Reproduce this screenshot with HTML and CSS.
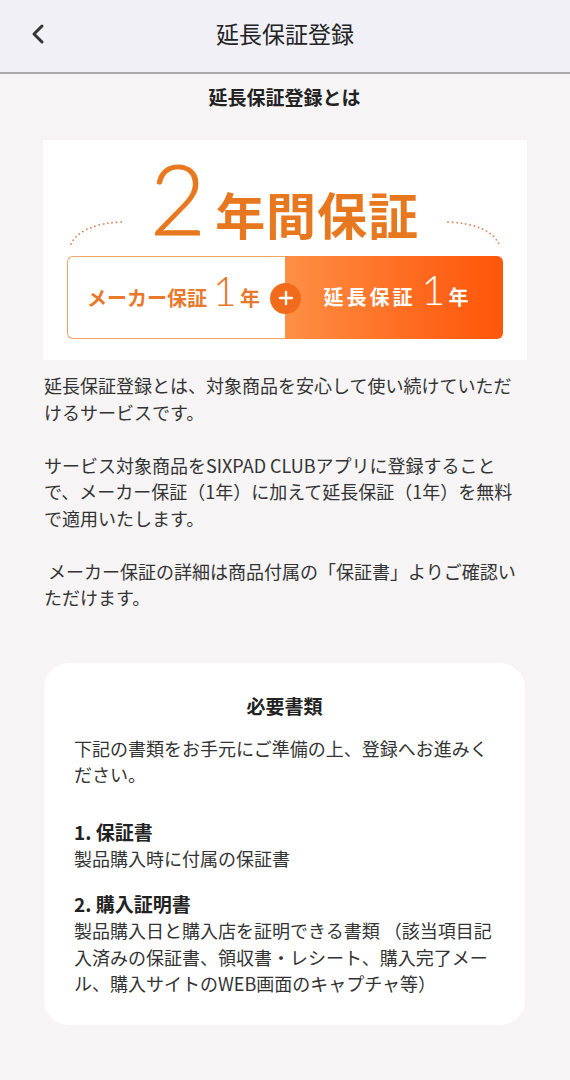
FILE: index.html
```html
<!DOCTYPE html>
<html lang="ja">
<head>
<meta charset="utf-8">
<title>延長保証登録</title>
<link rel="stylesheet" href="styles.css">
</head>
<body>
<header class="header">
  <div class="back">
    <svg width="16" height="22" viewBox="0 0 16 22"><polyline points="12,3 4,11 12,19" fill="none" stroke="#333" stroke-width="3" stroke-linecap="round" stroke-linejoin="round"/></svg>
  </div>
  <h1 class="header-title">延長保証登録</h1>
  <div></div>
</header>

<main class="page">
  <h2 class="subtitle">延長保証登録とは</h2>

  <section class="banner">
    <div class="headline">
      <svg class="arc" width="54" height="26" viewBox="0 0 54 26"><path d="M2 24 Q 12 4 53 2" fill="none" stroke="#d8926a" stroke-width="2" stroke-linecap="round" stroke-dasharray="0 4.4"/></svg>
      <span class="big-num">2</span>
      <span class="headline-text">年間保証</span>
      <svg class="arc" width="54" height="26" viewBox="0 0 54 26"><path d="M1 2 Q 42 4 52 24" fill="none" stroke="#d8926a" stroke-width="2" stroke-linecap="round" stroke-dasharray="0 4.4"/></svg>
    </div>
    <div class="box">
      <div class="box-left">
        <span class="box-label">メーカー保証</span><span class="box-num">1</span><span class="box-year">年</span>
      </div>
      <div class="box-right">
        <span class="box-label wide">延長保証</span><span class="box-num">1</span><span class="box-year">年</span>
      </div>
      <div class="plus">
        <svg width="16" height="16" viewBox="0 0 16 16"><path d="M8 2 V14 M2 8 H14" stroke="#fff" stroke-width="2.4" stroke-linecap="round"/></svg>
      </div>
    </div>
  </section>

  <p class="intro">延長保証登録とは、対象商品を安心して使い続けていただけるサービスです。<br><br>サービス対象商品をSIXPAD CLUBアプリに登録することで、メーカー保証（1年）に加えて延長保証（1年）を無料で適用いたします。<br><br>&nbsp;メーカー保証の詳細は商品付属の「保証書」よりご確認いただけます。</p>

  <section class="card">
    <h3 class="card-title">必要書類</h3>
    <p class="card-desc">下記の書類をお手元にご準備の上、登録へお進みください。</p>
    <div class="doc first">
      <h4 class="doc-title">1. 保証書</h4>
      <p class="doc-text">製品購入時に付属の保証書</p>
    </div>
    <div class="doc">
      <h4 class="doc-title">2. 購入証明書</h4>
      <p class="doc-text">製品購入日と購入店を証明できる書類 （該当項目記入済みの保証書、領収書・レシート、購入完了メール、購入サイトのWEB画面のキャプチャ等）</p>
    </div>
  </section>
</main>
</body>
</html>
```
FILE: styles.css
```css
* { box-sizing: border-box; }
html, body { margin: 0; padding: 0; }
body {
  background: #f6f4f5;
  font-family: "Noto Sans CJK JP", "Noto Sans", sans-serif;
  color: #333;
  width: 570px;
}
h1, h2, h3, h4, p { margin: 0; }

.header {
  height: 74px;
  background: #f1f0f7;
  border-bottom: 2px solid #aaaaad;
  display: grid;
  grid-template-columns: 70px 1fr 70px;
  align-items: center;
  padding-bottom: 6px;
}
.back {
  padding-left: 30px;
  display: flex;
  align-items: center;
  padding-top: 2px;
}
.header-title {
  text-align: center;
  font-size: 23px;
  font-weight: 400;
  color: #222;
  line-height: 30px;
}

.page {
  padding: 0 45px 0 44px;
}
.subtitle {
  margin-top: 10px;
  text-align: center;
  font-size: 19px;
  font-weight: 700;
  line-height: 26px;
  color: #222;
}

.banner {
  margin: 30px -2px 0 -1px;
  background: #fff;
  padding: 2px 24px 21px;
}
.headline {
  display: flex;
  justify-content: center;
  align-items: baseline;
  height: 114px;
  margin: 0 -24px;
  white-space: nowrap;
}
.arc {
  flex: none;
  align-self: flex-end;
  margin-bottom: 10px;
}
.big-num {
  flex: none;
  font-family: "Lato", "Noto Sans", sans-serif;
  font-weight: 300;
  font-size: 97px;
  line-height: 112px;
  color: #e8781f;
  margin-left: 27px;
  margin-right: 9px;
  -webkit-text-stroke: 0.8px #e8781f;
}
.headline-text {
  flex: none;
  font-size: 50px;
  font-weight: 700;
  letter-spacing: 1px;
  line-height: 1;
  color: #e8781f;
  margin-right: 28px;
}

.box {
  position: relative;
  height: 83px;
  display: grid;
  grid-template-columns: 1fr 1fr;
}
.box-left,
.box-right {
  display: flex;
  justify-content: center;
  align-items: baseline;
  padding-top: 14px;
  white-space: nowrap;
}
.box-left {
  background: #fff;
  border: 1.5px solid #f1a463;
  border-right: none;
  border-radius: 6px 0 0 6px;
  color: #e8782a;
  padding-right: 6px;
}
.box-right {
  background: linear-gradient(90deg, #fd9045 0%, #ff6a1e 60%, #ff560a 100%);
  border-radius: 0 6px 6px 0;
  color: #fff;
  padding-left: 4px;
}
.box-label {
  font-size: 20px;
  font-weight: 700;
  line-height: 40px;
}
.box-label.wide { letter-spacing: 3px; }
.box-num {
  font-family: "Lato", "Noto Sans", sans-serif;
  font-weight: 300;
  font-size: 41px;
  line-height: 40px;
  margin: 0 3px 0 6px;
}
.box-year {
  font-size: 20px;
  font-weight: 700;
}
.plus {
  position: absolute;
  left: 50%;
  top: 50%;
  width: 31px;
  height: 31px;
  margin: -15px 0 0 -15px;
  border-radius: 50%;
  background: #f26b1c;
  display: flex;
  align-items: center;
  justify-content: center;
}

.intro {
  margin-top: 12px;
  font-size: 18px;
  line-height: 26.5px;
  color: #333;
}

.card {
  margin-top: 52px;
  background: #fff;
  border-radius: 25px;
  padding: 30px 28px 28px 30px;
}
.card-title {
  text-align: center;
  font-size: 19px;
  font-weight: 700;
  line-height: 26px;
  color: #222;
  padding-right: 2px;
}
.card-desc {
  margin-top: 16px;
  font-size: 18px;
  line-height: 26.5px;
}
.doc { margin-top: 20px; }
.doc.first { margin-top: 31px; }
.doc-title {
  font-size: 19px;
  font-weight: 700;
  line-height: 26px;
  color: #222;
}
.doc-text {
  font-size: 18px;
  line-height: 26.5px;
}
```
